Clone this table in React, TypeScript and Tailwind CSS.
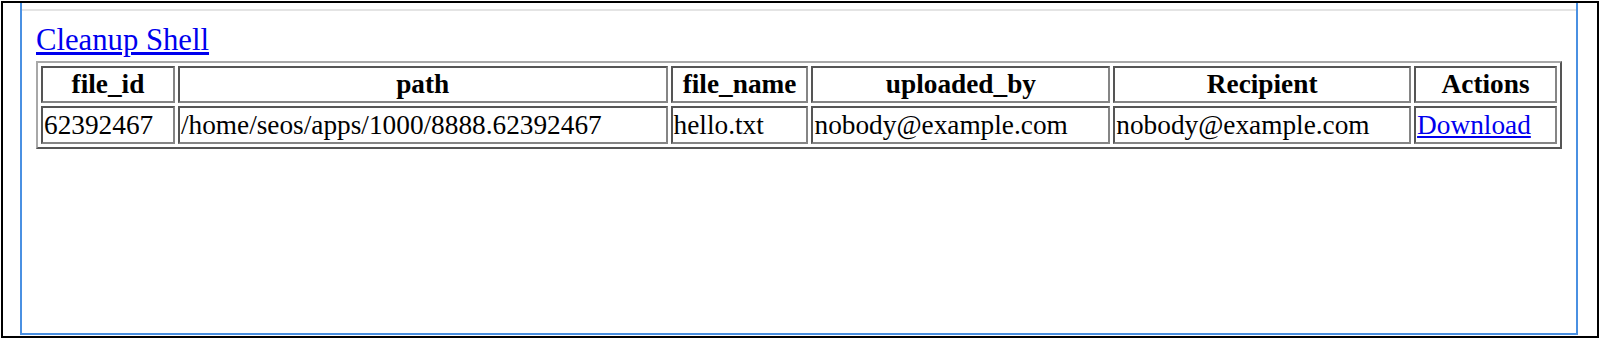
import React from "react";

type FileRow = {
	fileId: string;
	path: string;
	fileName: string;
	uploadedBy: string;
	recipient: string;
};

const columns = [
	{ label: "file_id", width: "w-[134px]" },
	{ label: "path", width: "w-[490px]" },
	{ label: "file_name", width: "w-[138px]" },
	{ label: "uploaded_by", width: "w-[299px]" },
	{ label: "Recipient", width: "w-[298px]" },
	{ label: "Actions", width: "w-[143px]" },
];

const rows: FileRow[] = [
	{
		fileId: "62392467",
		path: "/home/seos/apps/1000/8888.62392467",
		fileName: "hello.txt",
		uploadedBy: "nobody@example.com",
		recipient: "nobody@example.com",
	},
];

const cell =
	"border-2 border-t-[#555] border-l-[#555] border-b-[#858585] border-r-[#858585] p-px leading-[31px]";

export default function App() {
	return (
		<div className="w-[1600px] h-[339px] p-px bg-white [font-family:Liberation_Serif,Times_New_Roman,serif] text-black">
			<div className="h-full border-2 border-black pl-[17px] pr-[19px] pb-px flex">
				<div className="flex-1 border-x-2 border-b-2 border-[#4a90e2] flex flex-col">
					<div className="mt-[6px] h-[2px] bg-[#e4e4e4]" />

					<div className="px-[14px]">
						<a
							href="#"
							className="mt-[12px] inline-block text-[30.7px] leading-[34px] text-[#0000ee] underline"
						>
							Cleanup Shell
						</a>

						<table className="mt-[4px] table-fixed border-separate border-spacing-[3px] border-2 border-t-[#a8a8a8] border-l-[#a8a8a8] border-b-[#555] border-r-[#555] text-[27.3px]">
							<thead>
								<tr>
									{columns.map((col) => (
										<th
											key={col.label}
											className={`${col.width} ${cell} font-bold text-center`}
										>
											{col.label}
										</th>
									))}
								</tr>
							</thead>
							<tbody>
								{rows.map((row) => (
									<tr key={row.fileId}>
										<td className={`${cell} text-left`}>{row.fileId}</td>
										<td className={`${cell} text-left`}>{row.path}</td>
										<td className={`${cell} text-left`}>{row.fileName}</td>
										<td className={`${cell} text-left`}>{row.uploadedBy}</td>
										<td className={`${cell} text-left`}>{row.recipient}</td>
										<td className={`${cell} text-left leading-[32px]`}>
											<a href="#" className="text-[#0000ee] underline">
												Download
											</a>
										</td>
									</tr>
								))}
							</tbody>
						</table>
					</div>
				</div>
			</div>
		</div>
	);
}
